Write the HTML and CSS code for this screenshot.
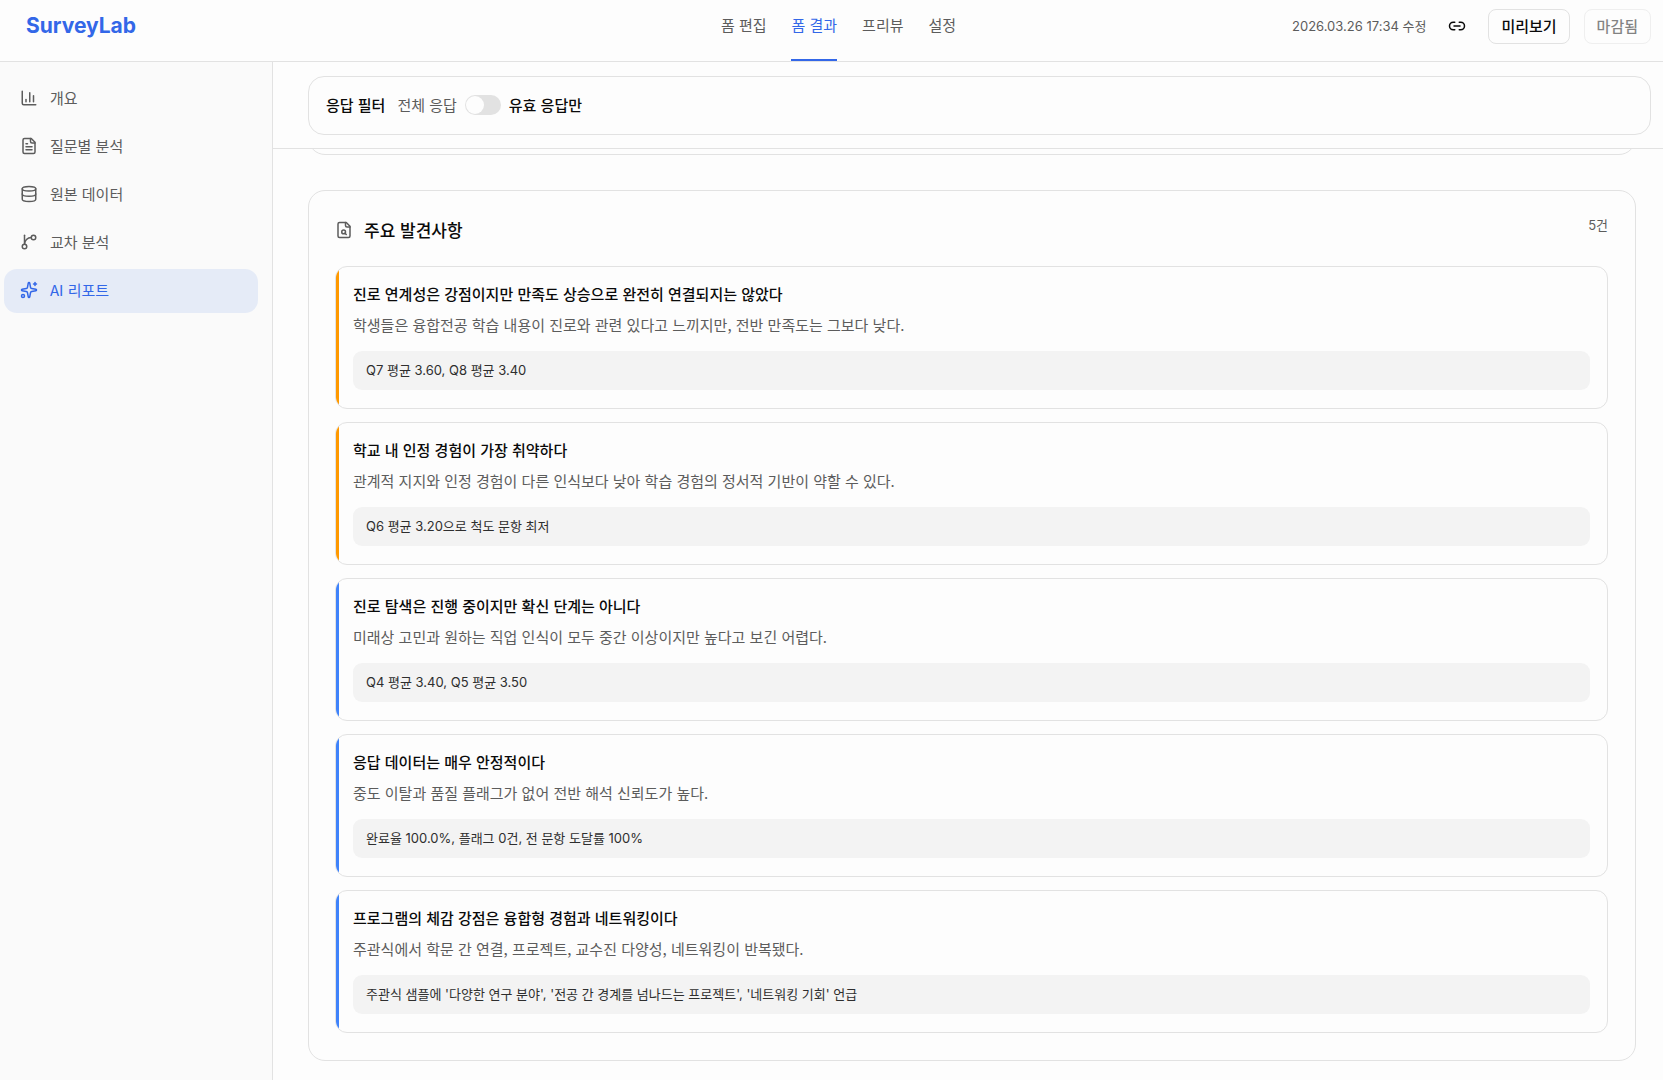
FILE: index.html
```html
<!DOCTYPE html>
<html lang="ko">
<head>
    <meta charset="UTF-8">
    <meta name="viewport" content="width=device-width, initial-scale=1.0">
    <title>SurveyLab - AI 리포트</title>
    <link rel="stylesheet" href="styles.css">
</head>
<body>

    <!-- Header -->
    <header class="header">
        <a href="#" class="logo">SurveyLab</a>
        <nav class="tabs">
            <a href="#">폼 편집</a>
            <a href="#" class="active">폼 결과</a>
            <a href="#">프리뷰</a>
            <a href="#">설정</a>
        </nav>
        <div class="actions">
            <span class="updated">2026.03.26 17:34 수정</span>
            <button type="button" class="icon-button" aria-label="링크 복사">
                <svg class="icon" viewBox="0 0 24 24"><path d="M9 17H7A5 5 0 0 1 7 7h2"/><path d="M15 7h2a5 5 0 1 1 0 10h-2"/><path d="M8 12h8"/></svg>
            </button>
            <button type="button" class="button">미리보기</button>
            <button type="button" class="button" disabled>마감됨</button>
        </div>
    </header>

    <div class="layout">

        <!-- Sidebar -->
        <aside class="sidebar">
            <a href="#">
                <svg class="icon" viewBox="0 0 24 24"><path d="M3 3v16a2 2 0 0 0 2 2h16"/><path d="M18 17V9"/><path d="M13 17V5"/><path d="M8 17v-3"/></svg>
                개요
            </a>
            <a href="#">
                <svg class="icon" viewBox="0 0 24 24"><path d="M15 2H6a2 2 0 0 0-2 2v16a2 2 0 0 0 2 2h12a2 2 0 0 0 2-2V7Z"/><path d="M14 2v4a2 2 0 0 0 2 2h4"/><path d="M10 9H8"/><path d="M16 13H8"/><path d="M16 17H8"/></svg>
                질문별 분석
            </a>
            <a href="#">
                <svg class="icon" viewBox="0 0 24 24"><ellipse cx="12" cy="5" rx="9" ry="3"/><path d="M3 5v14a9 3 0 0 0 18 0V5"/><path d="M3 12a9 3 0 0 0 18 0"/></svg>
                원본 데이터
            </a>
            <a href="#">
                <svg class="icon" viewBox="0 0 24 24"><path d="M6 3v12"/><circle cx="18" cy="6" r="3"/><circle cx="6" cy="18" r="3"/><path d="M15 6a9 9 0 0 0-9 9"/></svg>
                교차 분석
            </a>
            <a href="#" class="active">
                <svg class="icon" viewBox="0 0 24 24"><path d="M11.017 2.814a1 1 0 0 1 1.966 0l1.051 5.558a2 2 0 0 0 1.594 1.594l5.558 1.051a1 1 0 0 1 0 1.966l-5.558 1.051a2 2 0 0 0-1.594 1.594l-1.051 5.558a1 1 0 0 1-1.966 0l-1.051-5.558a2 2 0 0 0-1.594-1.594l-5.558-1.051a1 1 0 0 1 0-1.966l5.558-1.051a2 2 0 0 0 1.594-1.594z"/><path d="M20 2v4"/><path d="M22 4h-4"/><circle cx="4" cy="20" r="2"/></svg>
                AI 리포트
            </a>
        </aside>

        <!-- Main Content -->
        <main class="main">
            <div class="filter-bar">
                <div class="filter">
                    <strong>응답 필터</strong>
                    <label class="filter-switch">
                        <span class="muted">전체 응답</span>
                        <input type="checkbox" role="switch" class="toggle">
                        <span class="on">유효 응답만</span>
                    </label>
                </div>
            </div>

            <div class="content">
                <section class="card card-scrolled"></section>

                <section class="card">
                    <div class="card-head">
                        <h2>
                            <svg class="icon" viewBox="0 0 24 24"><path d="M15 2H6a2 2 0 0 0-2 2v16a2 2 0 0 0 2 2h12a2 2 0 0 0 2-2V7Z"/><path d="M14 2v4a2 2 0 0 0 2 2h4"/><circle cx="11.5" cy="14.5" r="2.5"/><path d="M13.3 16.3 15 18"/></svg>
                            주요 발견사항
                        </h2>
                        <span class="count">5건</span>
                    </div>

                    <div class="findings">
                        <article class="finding warning">
                            <h3>진로 연계성은 강점이지만 만족도 상승으로 완전히 연결되지는 않았다</h3>
                            <p>학생들은 융합전공 학습 내용이 진로와 관련 있다고 느끼지만, 전반 만족도는 그보다 낮다.</p>
                            <div class="evidence">Q7 평균 3.60, Q8 평균 3.40</div>
                        </article>
                        <article class="finding warning">
                            <h3>학교 내 인정 경험이 가장 취약하다</h3>
                            <p>관계적 지지와 인정 경험이 다른 인식보다 낮아 학습 경험의 정서적 기반이 약할 수 있다.</p>
                            <div class="evidence">Q6 평균 3.20으로 척도 문항 최저</div>
                        </article>
                        <article class="finding info">
                            <h3>진로 탐색은 진행 중이지만 확신 단계는 아니다</h3>
                            <p>미래상 고민과 원하는 직업 인식이 모두 중간 이상이지만 높다고 보긴 어렵다.</p>
                            <div class="evidence">Q4 평균 3.40, Q5 평균 3.50</div>
                        </article>
                        <article class="finding info">
                            <h3>응답 데이터는 매우 안정적이다</h3>
                            <p>중도 이탈과 품질 플래그가 없어 전반 해석 신뢰도가 높다.</p>
                            <div class="evidence">완료율 100.0%, 플래그 0건, 전 문항 도달률 100%</div>
                        </article>
                        <article class="finding info">
                            <h3>프로그램의 체감 강점은 융합형 경험과 네트워킹이다</h3>
                            <p>주관식에서 학문 간 연결, 프로젝트, 교수진 다양성, 네트워킹이 반복됐다.</p>
                            <div class="evidence">주관식 샘플에 '다양한 연구 분야', '전공 간 경계를 넘나드는 프로젝트', '네트워킹 기회' 언급</div>
                        </article>
                    </div>
                </section>
            </div>
        </main>
    </div>

</body>
</html>
```
FILE: styles.css
```css
/* Default styles */
* {
    box-sizing: border-box;
}

body {
    margin: 0;
    min-height: 100vh;
    display: flex;
    flex-direction: column;
    font-family: "Noto Sans CJK KR", sans-serif;
    font-size: 15px;
    line-height: 22px;
    color: #0a0a0a;
    background-color: #fdfdfd;
}

a {
    color: inherit;
    text-decoration: none;
}

h2, h3, p {
    margin: 0;
}

button {
    font: inherit;
    color: inherit;
    cursor: pointer;
}

.icon {
    width: 18px;
    height: 18px;
    flex-shrink: 0;
    fill: none;
    stroke: currentColor;
    stroke-width: 2;
    stroke-linecap: round;
    stroke-linejoin: round;
}

/* Header */
.header {
    display: grid;
    grid-template-columns: 1fr auto 1fr;
    height: 62px;
    padding: 0 12px 0 26px;
    border-bottom: 1px solid #e2e2e2;
}

.logo {
    padding-top: 12px;
    font-family: Inter, sans-serif;
    font-size: 21px;
    line-height: 28px;
    font-weight: 700;
    color: #3367e8;
}

.tabs {
    display: flex;
    gap: 25px;
}

.tabs a {
    padding-top: 14px;
    color: #5c5c5c;
    border-bottom: 2px solid transparent;
}

.tabs a.active {
    color: #3367e8;
    border-bottom-color: #3367e8;
}

.actions {
    display: flex;
    justify-content: flex-end;
    align-items: center;
    gap: 14px;
    padding-bottom: 9px;
}

.updated {
    font-family: Inter, "Noto Sans CJK KR", sans-serif;
    font-size: 13px;
    color: #5c5c5c;
}

.icon-button {
    display: grid;
    place-items: center;
    width: 34px;
    height: 34px;
    padding: 0;
    border: 0;
    background: none;
}

.button {
    height: 35px;
    padding: 0 12px 1px;
    border: 1px solid #e2e2e2;
    border-radius: 8px;
    background-color: #fdfdfd;
    font-weight: 500;
}

.button:disabled {
    opacity: 0.5;
    cursor: default;
}

.layout {
    flex: 1;
    display: flex;
}

/* Sidebar */
.sidebar {
    width: 273px;
    flex-shrink: 0;
    display: flex;
    flex-direction: column;
    gap: 4px;
    padding: 15px 14px 15px 4px;
    background-color: #fafafa;
    border-right: 1px solid #e2e2e2;
}

.sidebar a {
    display: flex;
    align-items: center;
    gap: 12px;
    height: 44px;
    padding: 0 16px 2px;
    border-radius: 13px;
    color: #5c5c5c;
}

.sidebar a.active {
    color: #3367e8;
    background-color: #e5ebf7;
}

/* Main column */
.main {
    flex: 1;
    min-width: 0;
}

.filter-bar {
    position: sticky;
    top: 0;
    z-index: 1;
    padding: 14px 12px 13px 35px;
    background-color: #fdfdfd;
    border-bottom: 1px solid #e2e2e2;
}

.filter {
    display: flex;
    align-items: center;
    gap: 12px;
    height: 59px;
    padding: 0 17px 2px;
    border: 1px solid #e2e2e2;
    border-radius: 16px;
}

.filter strong,
.filter .on {
    font-weight: 500;
}

.filter-switch {
    display: flex;
    align-items: center;
    gap: 8px;
    cursor: pointer;
}

.muted {
    color: #5c5c5c;
}

.toggle {
    appearance: none;
    width: 36px;
    height: 20px;
    margin: 0;
    padding: 1px;
    border-radius: 10px;
    background-color: #e2e2e2;
    cursor: pointer;
}

.toggle::before {
    content: "";
    display: block;
    width: 18px;
    height: 18px;
    border-radius: 50%;
    background-color: #fdfdfd;
}

.toggle:checked {
    background-color: #3367e8;
}

.toggle:checked::before {
    margin-left: auto;
}

.content {
    display: flex;
    flex-direction: column;
    gap: 35px;
    padding: 0 27px 19px 35px;
}

/* Cards */
.card {
    padding: 26px 27px 27px 26px;
    border: 1px solid #e2e2e2;
    border-radius: 17px;
}

/* end of the previous card, mostly under the filter bar */
.card-scrolled {
    margin-top: -49px;
}

.card-head {
    display: flex;
    justify-content: space-between;
    margin-bottom: 23px;
}

.card-head h2 {
    display: flex;
    align-items: center;
    gap: 11px;
    font-size: 17px;
    line-height: 26px;
    font-weight: 500;
}

.card-head .icon {
    color: #5c5c5c;
}

.count {
    font-family: Inter, "Noto Sans CJK KR", sans-serif;
    font-size: 13px;
    line-height: 16px;
    color: #5c5c5c;
}

/* Findings */
.findings {
    display: flex;
    flex-direction: column;
    gap: 13px;
}

.finding {
    position: relative;
    overflow: hidden;
    padding: 16px 17px 18px 17px;
    border: 1px solid #e2e2e2;
    border-radius: 12px;
}

.finding::before {
    content: "";
    position: absolute;
    top: 0;
    bottom: 0;
    left: 0;
    width: 3px;
}

.finding.warning::before {
    background-color: #ff9900;
}

.finding.info::before {
    background-color: #3f83fb;
}

.finding h3 {
    margin-bottom: 7px;
    font-size: 15px;
    font-weight: 500;
}

.finding p {
    margin-bottom: 13px;
    line-height: 26px;
    color: #5c5c5c;
}

.evidence {
    padding: 8px 13px 9px;
    border-radius: 9px;
    background-color: #f3f3f3;
    font-family: Inter, "Noto Sans CJK KR", sans-serif;
    font-size: 13px;
    color: #2e2e2e;
}
```
